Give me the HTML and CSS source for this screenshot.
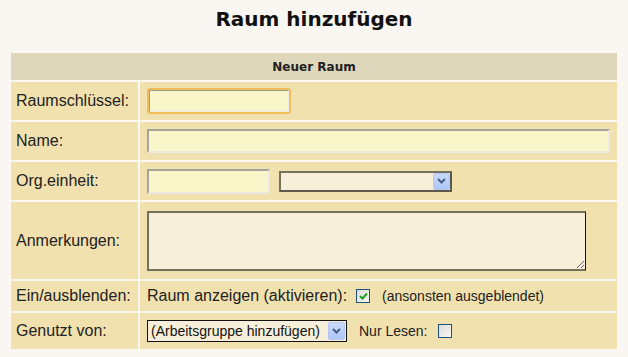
FILE: index.html
```html
<!DOCTYPE html>
<html lang="de">
<head>
  <meta charset="UTF-8">
  <title>Raum hinzufügen</title>
  <link rel="stylesheet" href="styles.css">
</head>
<body>
  <h1 class="titel">Raum hinzufügen</h1>

  <table class="formular">
    <tr class="kopf">
      <th colspan="2">Neuer Raum</th>
    </tr>
    <tr class="zeile">
      <td class="label">Raumschlüssel:</td>
      <td class="wert"><span class="fokus"><input type="text" class="feld feld-fokus"></span></td>
    </tr>
    <tr class="zeile">
      <td class="label">Name:</td>
      <td class="wert"><input type="text" class="feld feld-name"></td>
    </tr>
    <tr class="zeile">
      <td class="label">Org.einheit:</td>
      <td class="wert">
        <div class="reihe">
          <input type="text" class="feld feld-org">
          <span class="combo combo-org">
            <select></select>
            <span class="combo-btn"><svg width="9" height="6" viewBox="0 0 9 6"><path d="M1 1 L4.5 4.5 L8 1" fill="none" stroke="#4a5f86" stroke-width="2"/></svg></span>
          </span>
        </div>
      </td>
    </tr>
    <tr class="zeile-gross">
      <td class="label">Anmerkungen:</td>
      <td class="wert"><textarea class="notiz"></textarea></td>
    </tr>
    <tr class="zeile-klein">
      <td class="label">Ein/ausblenden:</td>
      <td class="wert">
        <div class="reihe">
          <span>Raum anzeigen (aktivieren):</span>
          <span class="haken haken-an"><svg width="9" height="8" viewBox="0 0 9 8"><path d="M1 4 L3.5 6.5 L8 1.5" fill="none" stroke="#21a121" stroke-width="2"/></svg></span>
          <span class="hinweis">(ansonsten ausgeblendet)</span>
        </div>
      </td>
    </tr>
    <tr class="zeile-letzte">
      <td class="label">Genutzt von:</td>
      <td class="wert">
        <div class="reihe">
          <span class="combo combo-gruppe">
            <select><option>(Arbeitsgruppe hinzufügen)</option></select>
            <span class="combo-btn"><svg width="9" height="6" viewBox="0 0 9 6"><path d="M1 1 L4.5 4.5 L8 1" fill="none" stroke="#4a5f86" stroke-width="2"/></svg></span>
          </span>
          <span class="hinweis nur-lesen">Nur Lesen:</span>
          <span class="haken"></span>
        </div>
      </td>
    </tr>
  </table>
</body>
</html>
```

FILE: styles.css
```css
body {
  margin: 0;
  background-color: #faf6f2;
  font-family: "Liberation Sans", Arial, sans-serif;
  color: #222;
}

.titel {
  font-family: "DejaVu Sans", Verdana, sans-serif;
  font-size: 20px;
  line-height: 24px;
  text-align: center;
  margin: 7px 0 0 0;
  color: #111;
}

.formular {
  width: 610px;
  margin: 20px auto 0 auto;
  border-collapse: separate;
  border-spacing: 2px;
}

.formular td,
.formular th {
  padding: 0;
}

.kopf th {
  height: 27px;
  background-color: #dfd7bb;
  font-family: "DejaVu Sans", Verdana, sans-serif;
  font-size: 12px;
  font-weight: bold;
  color: #222;
}

.zeile td { height: 38px; }
.zeile-gross td { height: 77px; }
.zeile-klein td { height: 30px; }
.zeile-letzte td { height: 36px; }

.label {
  width: 122px;
  padding-left: 5px !important;
  background-color: #f1e1af;
  font-size: 16px;
  vertical-align: middle;
}

.wert {
  background-color: #f1e1af;
  padding-left: 7px !important;
  vertical-align: middle;
  font-size: 16px;
}

.reihe {
  display: flex;
  align-items: center;
}

.feld {
  display: block;
  box-sizing: border-box;
  margin: 0;
  padding: 0 3px;
  background-color: #f9f7c9;
  border-style: solid;
  border-width: 2px;
  border-color: #a7a49c #ebe9e2 #ebe9e2 #a7a49c;
  outline: none;
}

.fokus {
  display: block;
  width: 144px;
  height: 26px;
  box-sizing: border-box;
  border: 2px solid #efbe5a;
  border-radius: 3px;
}

.feld-fokus {
  width: 140px;
  height: 22px;
  border-width: 1px;
  border-color: #9d9a90 #eeece6 #eeece6 #9d9a90;
}

.feld-name {
  width: 463px;
  height: 24px;
}

.feld-org {
  width: 123px;
  height: 25px;
}

.combo {
  display: flex;
  box-sizing: border-box;
  background-color: #f7efda;
}

.combo select {
  flex: 1;
  appearance: none;
  -webkit-appearance: none;
  border: none;
  outline: none;
  background: transparent;
  margin: 0;
  padding: 0 0 0 3px;
  font-family: "Liberation Sans", Arial, sans-serif;
  font-size: 14px;
  color: #111;
}

.combo-btn {
  width: 15px;
  display: flex;
  align-items: center;
  justify-content: center;
  background: linear-gradient(#c9dafc, #aec6f6);
  border: 1px solid #b3c7f2;
  border-radius: 2px;
}

.combo-org {
  width: 173px;
  height: 21px;
  margin-left: 9px;
  border-style: solid;
  border-width: 2px;
  border-color: #75715f #5d5a4c #5d5a4c #75715f;
}

.combo-gruppe {
  width: 200px;
  height: 22px;
  border: 1px solid #111;
}

.combo-gruppe .combo-btn {
  margin: 1px;
}

.notiz {
  display: block;
  box-sizing: border-box;
  width: 439px;
  height: 60px;
  margin: 0;
  background-color: #f7efda;
  border-style: solid;
  border-width: 2px 1px 2px 2px;
  border-color: #74705e #111 #74705e #74705e;
  outline: none;
}

.haken {
  display: inline-flex;
  align-items: center;
  justify-content: center;
  box-sizing: border-box;
  width: 14px;
  height: 14px;
  border: 1px solid #1c5180;
  background: linear-gradient(135deg, #dcdcd4, #f8f8f6);
}

.haken-an {
  margin-left: 9px;
}

.hinweis {
  font-size: 14px;
  margin-left: 12px;
}

.nur-lesen {
  margin-right: 11px;
}
```
